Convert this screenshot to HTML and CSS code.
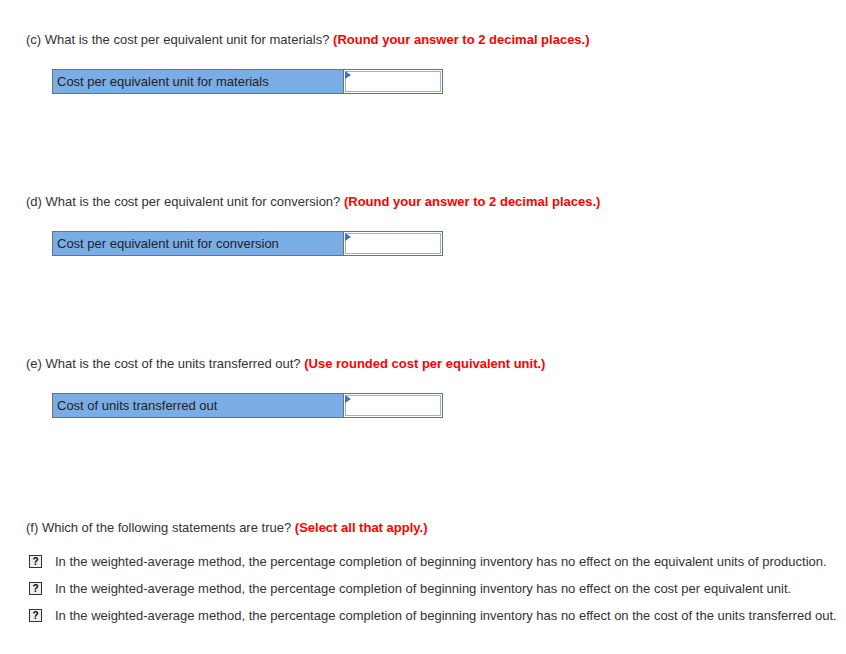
FILE: index.html
```html
<!DOCTYPE html>
<html>
<head>
<meta charset="utf-8">
<link rel="stylesheet" href="styles.css">
</head>
<body>
<div class="page">
  <section class="q">
    <p class="prompt">(c) What is the cost per equivalent unit for materials? <b class="note">(Round your answer to 2 decimal places.)</b></p>
    <div class="answer">
      <div class="label">Cost per equivalent unit for materials</div>
      <div class="field"><span class="flag"></span><div class="input"></div></div>
    </div>
  </section>
  <section class="q">
    <p class="prompt">(d) What is the cost per equivalent unit for conversion? <b class="note">(Round your answer to 2 decimal places.)</b></p>
    <div class="answer">
      <div class="label">Cost per equivalent unit for conversion</div>
      <div class="field"><span class="flag"></span><div class="input"></div></div>
    </div>
  </section>
  <section class="q">
    <p class="prompt">(e) What is the cost of the units transferred out? <b class="note">(Use rounded cost per equivalent unit.)</b></p>
    <div class="answer">
      <div class="label">Cost of units transferred out</div>
      <div class="field"><span class="flag"></span><div class="input"></div></div>
    </div>
  </section>
  <section class="q last">
    <p class="prompt">(f) Which of the following statements are true? <b class="note">(Select all that apply.)</b></p>
    <ul class="choices">
      <li><span class="box">?</span>In the weighted-average method, the percentage completion of beginning inventory has no effect on the equivalent units of production.</li>
      <li><span class="box">?</span>In the weighted-average method, the percentage completion of beginning inventory has no effect on the cost per equivalent unit.</li>
      <li><span class="box">?</span>In the weighted-average method, the percentage completion of beginning inventory has no effect on the cost of the units transferred out.</li>
    </ul>
  </section>
</div>
</body>
</html>
```
FILE: styles.css
```css
html, body {
  margin: 0;
  padding: 0;
  background: #fff;
}
body {
  font-family: "Liberation Sans", Arial, sans-serif;
  font-size: 13px;
  color: #333;
}
.page {
  padding: 32px 0 0 26px;
}
.q {
  height: 162px;
}
.q.last {
  margin-top: 2px;
  height: auto;
}
.prompt {
  margin: 0;
  line-height: 16px;
}
.note {
  color: #f00;
  font-weight: bold;
}
.answer {
  display: flex;
  margin: 21px 0 0 26px;
  width: 391px;
  height: 25px;
  border: 1px solid #707070;
  box-sizing: border-box;
}
.label {
  width: 291px;
  box-sizing: border-box;
  background: #7aade6;
  border-right: 1px solid #707070;
  padding-left: 4px;
  line-height: 23px;
  color: #222;
}
.field {
  position: relative;
  flex: 1;
  padding: 1px;
  background: #fff;
}
.input {
  height: 100%;
  box-sizing: border-box;
  border: 1px solid #8fb3dd;
  background: #fff;
}
.flag {
  position: absolute;
  left: 1px;
  top: 1px;
  width: 0;
  height: 0;
  border-top: 4px solid transparent;
  border-bottom: 4px solid transparent;
  border-left: 6px solid #3a72c8;
}
.choices {
  list-style: none;
  margin: 12px 0 0 0;
  padding: 0;
}
.choices li {
  display: flex;
  align-items: center;
  height: 27px;
  line-height: 16px;
}
.box {
  width: 11px;
  height: 11px;
  border: 1px solid #333;
  box-sizing: content-box;
  margin: 0 13px 0 3px;
  font-size: 10px;
  font-weight: bold;
  line-height: 11px;
  text-align: center;
  color: #000;
  background: #eee;
}
```
